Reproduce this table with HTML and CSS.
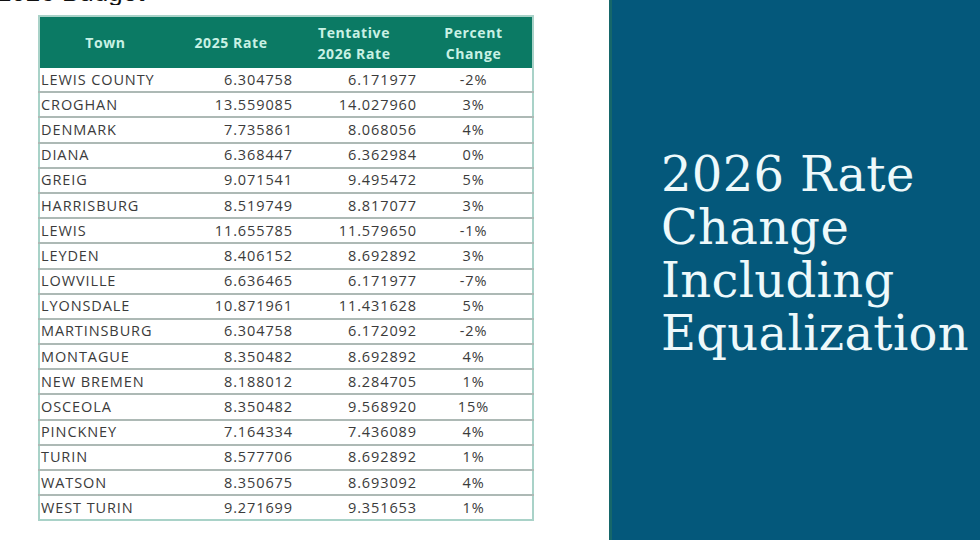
FILE: index.html
```html
<!DOCTYPE html>
<html lang="en">
<head>
<meta charset="utf-8">
<title>2026 Rate Change Including Equalization</title>
<link rel="stylesheet" href="styles.css">
</head>
<body>
<div class="slide">
  <section class="left">
    <div class="cap"><span class="cap-text">of 2026 Budget</span></div>
    <table class="rates">
      <colgroup>
        <col class="w-town">
        <col class="w-2025">
        <col class="w-2026">
        <col class="w-pct">
      </colgroup>
      <thead>
        <tr>
          <th class="c-town">Town</th>
          <th class="c-2025">2025 Rate</th>
          <th class="c-2026">Tentative<br>2026 Rate</th>
          <th class="c-pct">Percent<br>Change</th>
        </tr>
      </thead>
      <tbody>
        <tr><td class="c-town">LEWIS COUNTY</td><td class="c-2025">6.304758</td><td class="c-2026">6.171977</td><td class="c-pct">-2%</td></tr>
        <tr><td class="c-town">CROGHAN</td><td class="c-2025">13.559085</td><td class="c-2026">14.027960</td><td class="c-pct">3%</td></tr>
        <tr><td class="c-town">DENMARK</td><td class="c-2025">7.735861</td><td class="c-2026">8.068056</td><td class="c-pct">4%</td></tr>
        <tr><td class="c-town">DIANA</td><td class="c-2025">6.368447</td><td class="c-2026">6.362984</td><td class="c-pct">0%</td></tr>
        <tr><td class="c-town">GREIG</td><td class="c-2025">9.071541</td><td class="c-2026">9.495472</td><td class="c-pct">5%</td></tr>
        <tr><td class="c-town">HARRISBURG</td><td class="c-2025">8.519749</td><td class="c-2026">8.817077</td><td class="c-pct">3%</td></tr>
        <tr><td class="c-town">LEWIS</td><td class="c-2025">11.655785</td><td class="c-2026">11.579650</td><td class="c-pct">-1%</td></tr>
        <tr><td class="c-town">LEYDEN</td><td class="c-2025">8.406152</td><td class="c-2026">8.692892</td><td class="c-pct">3%</td></tr>
        <tr><td class="c-town">LOWVILLE</td><td class="c-2025">6.636465</td><td class="c-2026">6.171977</td><td class="c-pct">-7%</td></tr>
        <tr><td class="c-town">LYONSDALE</td><td class="c-2025">10.871961</td><td class="c-2026">11.431628</td><td class="c-pct">5%</td></tr>
        <tr><td class="c-town">MARTINSBURG</td><td class="c-2025">6.304758</td><td class="c-2026">6.172092</td><td class="c-pct">-2%</td></tr>
        <tr><td class="c-town">MONTAGUE</td><td class="c-2025">8.350482</td><td class="c-2026">8.692892</td><td class="c-pct">4%</td></tr>
        <tr><td class="c-town">NEW BREMEN</td><td class="c-2025">8.188012</td><td class="c-2026">8.284705</td><td class="c-pct">1%</td></tr>
        <tr><td class="c-town">OSCEOLA</td><td class="c-2025">8.350482</td><td class="c-2026">9.568920</td><td class="c-pct">15%</td></tr>
        <tr><td class="c-town">PINCKNEY</td><td class="c-2025">7.164334</td><td class="c-2026">7.436089</td><td class="c-pct">4%</td></tr>
        <tr><td class="c-town">TURIN</td><td class="c-2025">8.577706</td><td class="c-2026">8.692892</td><td class="c-pct">1%</td></tr>
        <tr><td class="c-town">WATSON</td><td class="c-2025">8.350675</td><td class="c-2026">8.693092</td><td class="c-pct">4%</td></tr>
        <tr><td class="c-town">WEST TURIN</td><td class="c-2025">9.271699</td><td class="c-2026">9.351653</td><td class="c-pct">1%</td></tr>
      </tbody>
    </table>
  </section>
  <aside class="panel">
    <h1 class="title">2026 Rate<br>Change<br>Including<br>Equalization</h1>
  </aside>
</div>
</body>
</html>
```

FILE: styles.css
```css
html, body {
  margin: 0;
  padding: 0;
  background: #ffffff;
}

.slide {
  width: 980px;
  height: 540px;
  display: flex;
  overflow: hidden;
}

.left {
  width: 609px;
  flex: none;
  padding-left: 38px;
  box-sizing: border-box;
}

.cap {
  height: 5px;
  overflow: hidden;
  margin-left: -70px;
}

.cap-text {
  display: block;
  margin-top: -21px;
  font-family: "Liberation Sans", Arial, sans-serif;
  font-size: 26px;
  line-height: 26px;
  color: #111;
}

.rates {
  margin-top: 10px;
  width: 494px;
  border-collapse: collapse;
  border: 2px solid #a9d2c8;
  font-family: "Open Sans", "Liberation Sans", sans-serif;
  table-layout: fixed;
}

.w-town { width: 122px; }
.w-2025 { width: 136px; }
.w-2026 { width: 124px; }
.w-pct { width: 112px; }

.rates th {
  background: #0b7a64;
  color: #c9f1e4;
  font-size: 14px;
  font-weight: 700;
  letter-spacing: 0.6px;
  line-height: 21px;
  height: 51px;
  padding: 0;
  text-align: center;
  vertical-align: middle;
}

.rates td {
  height: 23.2px;
  padding: 0;
  font-size: 14.5px;
  letter-spacing: 0.9px;
  color: #3b3b3b;
  border-bottom: 2px solid #adb9b5;
  line-height: 20px;
  vertical-align: middle;
  white-space: nowrap;
  overflow: visible;
}

.rates tbody tr:last-child td {
  border-bottom: none;
}

.rates th.c-town { padding-left: 10px; }
.rates th.c-2025 { padding-left: 4px; }
.rates th.c-2026 { padding-right: 10px; }
.rates th.c-pct { padding-right: 6px; }

.rates td.c-town { text-align: left; padding-left: 1px; }
.rates td.c-2025 { text-align: right; padding-right: 4px; }
.rates td.c-2026 { text-align: right; padding-right: 4px; }
.rates td.c-pct { text-align: center; padding-right: 6px; }

.panel {
  flex: 1;
  background: #04587b;
  border-left: 3px solid #16676a;
  display: flex;
  align-items: flex-start;
  padding-left: 49px;
  padding-top: 148px;
}

.title {
  margin: 0;
  font-family: "DejaVu Serif", "Liberation Serif", serif;
  font-weight: 400;
  font-size: 48px;
  line-height: 53px;
  color: #eef9fb;
  letter-spacing: 0.3px;
  white-space: nowrap;
}
```
